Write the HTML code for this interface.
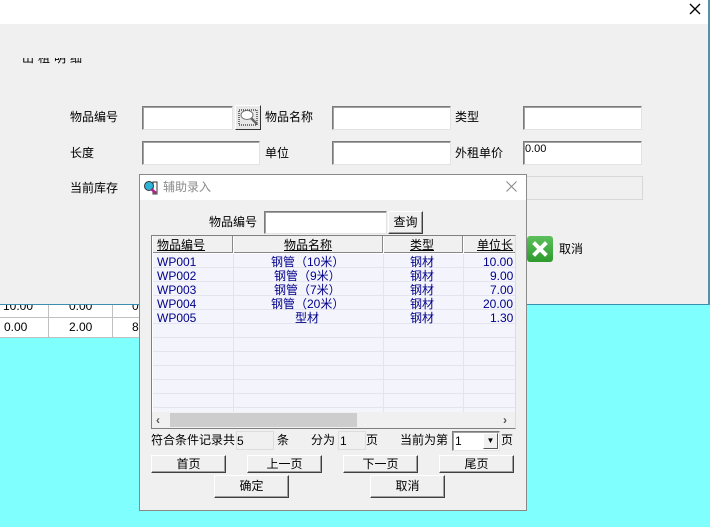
<!DOCTYPE html>
<html><head><meta charset="utf-8"><style>
*{margin:0;padding:0;box-sizing:border-box}
body{width:710px;height:527px;overflow:hidden;background:#80ffff;font-family:"Liberation Sans","Noto Sans CJK SC",sans-serif;font-size:12px;color:#000;position:relative}
.a{position:absolute}
.in{position:absolute;background:#fff;border:1px solid #7a7a7a;border-right-color:#e3e3e3;border-bottom-color:#e3e3e3;box-shadow:inset 1px 1px 0 #a0a0a0}
.lb{position:absolute;font-size:12px;line-height:14px;white-space:nowrap}
.btn{position:absolute;background:#f0f0f0;border:1px solid;border-color:#fff #404040 #404040 #fff;box-shadow:inset -1px -1px 0 #a0a0a0;text-align:center;font-size:12px;line-height:16px}
.bl{color:#00008b;font-size:12px;line-height:14px;position:absolute;white-space:nowrap}
</style></head><body>
<div class="a" style="left:0;top:0;width:710px;height:24px;background:#fff"></div>
<div class="a" style="left:0;top:24px;width:708px;height:280px;background:#f0f0f0"></div>
<div class="a" style="left:0;top:304px;width:708px;height:1px;background:#3a8fb0"></div>
<div class="a" style="left:708px;top:0;width:2px;height:305px;background:#5a8fa8"></div>
<div class="a" style="left:689px;top:3px"><svg width="12" height="12"><path d="M1 1L11 11M11 1L1 11" stroke="#000" stroke-width="1.3"/></svg></div>
<div class="a" style="left:22px;top:58px;width:80px;height:8px;overflow:hidden"><div style="font-size:12px;line-height:14px;margin-top:-7px;letter-spacing:4px">出租明细</div></div>
<!-- left grid -->
<div class="a" style="left:0;top:305px;width:140px;height:33px;background:#fff"></div>
<div class="a" style="left:0;top:317px;width:140px;height:1px;background:#c0c0c0"></div>
<div class="a" style="left:0;top:337px;width:140px;height:1px;background:#c0c0c0"></div>
<div class="a" style="left:48px;top:305px;width:1px;height:33px;background:#c0c0c0"></div>
<div class="a" style="left:112px;top:305px;width:1px;height:33px;background:#c0c0c0"></div>
<div class="a" style="left:0;top:305px;width:140px;height:12px;overflow:hidden"><div style="position:absolute;top:-6px;left:3px;font-size:12px">10.00</div><div style="position:absolute;top:-6px;left:69px">0.00</div><div style="position:absolute;top:-6px;left:132px">0</div></div>
<div class="lb" style="left:4px;top:320px">0.00</div>
<div class="lb" style="left:69px;top:320px">2.00</div>
<div class="lb" style="left:132px;top:320px">8</div>
<!-- main fields -->
<div class="lb" style="left:70px;top:110px">物品编号</div>
<div class="in" style="left:142px;top:106px;width:91px;height:24px"></div>
<div class="a" style="left:235px;top:105px;width:26px;height:25px;border:1px solid;border-color:#fff #333 #333 #fff;background:#e8e8e8"><svg width="24" height="23" viewBox="0 0 24 23"><rect x="3" y="4" width="18" height="15" fill="none" stroke="#000" stroke-dasharray="1 1"/><ellipse cx="11" cy="9" rx="6" ry="4.5" fill="#fff" stroke="#777"/><line x1="15" y1="12" x2="21" y2="18" stroke="#666" stroke-width="2.5"/></svg></div>
<div class="lb" style="left:265px;top:110px">物品名称</div>
<div class="in" style="left:332px;top:106px;width:119px;height:24px"></div>
<div class="lb" style="left:455px;top:110px">类型</div>
<div class="in" style="left:523px;top:106px;width:119px;height:24px"></div>
<div class="lb" style="left:70px;top:146px">长度</div>
<div class="in" style="left:142px;top:141px;width:118px;height:24px"></div>
<div class="lb" style="left:265px;top:146px">单位</div>
<div class="in" style="left:332px;top:141px;width:119px;height:24px"></div>
<div class="lb" style="left:455px;top:146px">外租单价</div>
<div class="in" style="left:523px;top:141px;width:119px;height:24px"><span style="position:absolute;left:1px;top:1px;font-size:11px;line-height:12px">0.00</span></div>
<div class="lb" style="left:70px;top:181px">当前库存</div>
<div class="a" style="left:523px;top:176px;width:120px;height:24px;border:1px solid #d8d8d8;background:#f0f0f0"></div>
<div class="a" style="left:527px;top:236px;width:26px;height:26px;border-radius:3px;background:linear-gradient(#5cc05c,#2e9a2e)"><svg width="26" height="26"><path d="M8 8 L18 18 M18 8 L8 18" stroke="#fff" stroke-width="4" stroke-linecap="square"/></svg></div>
<div class="lb" style="left:559px;top:242px">取消</div>
<!-- dialog -->
<div class="a" style="left:139px;top:174px;width:388px;height:337px;background:#f0f0f0;border:1px solid #8a8a8a"></div>
<div class="a" style="left:140px;top:175px;width:386px;height:25px;background:#fff"></div>
<div class="a" style="left:143px;top:179px"><svg width="16" height="16"><rect x="10" y="3" width="4" height="12" fill="none" stroke="#333"/><circle cx="6" cy="7" r="4.5" fill="#2ab5d8" stroke="#333"/><line x1="8" y1="10" x2="13" y2="14" stroke="#b0208a" stroke-width="2.5"/></svg></div>
<div class="lb" style="left:163px;top:180px;color:#8a8a8a">辅助录入</div>
<div class="a" style="left:506px;top:181px"><svg width="11" height="11"><path d="M0.5 0.5L10.5 10.5M10.5 0.5L0.5 10.5" stroke="#888" stroke-width="1"/></svg></div>
<div class="lb" style="left:209px;top:215px">物品编号</div>
<div class="in" style="left:264px;top:211px;width:123px;height:23px"></div>
<div class="btn" style="left:388px;top:211px;width:35px;height:23px;line-height:20px">查询</div>
<!-- grid -->
<div class="a" style="left:151px;top:235px;width:365px;height:194px;background:#fff;border:1px solid #808080;border-right-color:#ddd"></div>
<div class="a" style="left:153px;top:236px;width:362px;height:17px;background:#f0f0f0;border-bottom:1px solid #888"></div>
<div class="a" style="left:232px;top:236px;width:2px;height:17px;background:#888;border-right:1px solid #fff"></div>
<div class="a" style="left:382px;top:236px;width:2px;height:17px;background:#888;border-right:1px solid #fff"></div>
<div class="a" style="left:462px;top:236px;width:2px;height:17px;background:#888;border-right:1px solid #fff"></div>
<div class="lb" style="left:157px;top:238px;text-decoration:underline">物品编号</div>
<div class="lb" style="left:284px;top:238px;text-decoration:underline">物品名称</div>
<div class="lb" style="left:410px;top:238px;text-decoration:underline">类型</div>
<div class="lb" style="left:477px;top:238px;text-decoration:underline;width:38px;overflow:hidden">单位长</div>
<div class="a" style="left:153px;top:254px;width:362px;height:158px;background:#f4f4fc"></div>
<div class="a" style="left:233px;top:254px;width:1px;height:158px;background:#e4e4ee"></div>
<div class="a" style="left:383px;top:254px;width:1px;height:158px;background:#e4e4ee"></div>
<div class="a" style="left:463px;top:254px;width:1px;height:158px;background:#e4e4ee"></div>
<div class="a" style="left:153px;top:254px;width:362px;height:158px;background:repeating-linear-gradient(transparent 0 13px,#e4e4ee 13px 14px)"></div>
<div class="bl" style="left:157px;top:255px">WP001</div><div class="bl" style="left:271px;top:255px">钢管（10米）</div><div class="bl" style="left:410px;top:255px">钢材</div><div class="bl" style="left:483px;top:255px">10.00</div>
<div class="bl" style="left:157px;top:269px">WP002</div><div class="bl" style="left:274px;top:269px">钢管（9米）</div><div class="bl" style="left:410px;top:269px">钢材</div><div class="bl" style="left:490px;top:269px">9.00</div>
<div class="bl" style="left:157px;top:283px">WP003</div><div class="bl" style="left:274px;top:283px">钢管（7米）</div><div class="bl" style="left:410px;top:283px">钢材</div><div class="bl" style="left:490px;top:283px">7.00</div>
<div class="bl" style="left:157px;top:297px">WP004</div><div class="bl" style="left:271px;top:297px">钢管（20米）</div><div class="bl" style="left:410px;top:297px">钢材</div><div class="bl" style="left:483px;top:297px">20.00</div>
<div class="bl" style="left:157px;top:311px">WP005</div><div class="bl" style="left:295px;top:311px">型材</div><div class="bl" style="left:410px;top:311px">钢材</div><div class="bl" style="left:490px;top:311px">1.30</div>
<div class="a" style="left:152px;top:412px;width:363px;height:16px;background:#f0f0f0"></div>
<div class="a" style="left:170px;top:413px;width:187px;height:14px;background:#cdcdcd"></div>
<div class="lb" style="left:156px;top:413px;font-size:12px;font-weight:bold;color:#555">‹</div>
<div class="lb" style="left:503px;top:413px;font-size:12px;font-weight:bold;color:#555">›</div>
<!-- footer -->
<div class="lb" style="left:151px;top:433px">符合条件记录共</div>
<div class="a" style="left:236px;top:431px;width:38px;height:19px;border:1px solid #ddd;background:#f0f0f0"><span style="position:absolute;left:0;top:2px">5</span></div>
<div class="lb" style="left:277px;top:433px">条</div>
<div class="lb" style="left:311px;top:433px">分为</div>
<div class="a" style="left:338px;top:431px;width:28px;height:19px;border:1px solid #ddd;background:#f0f0f0"><span style="position:absolute;left:1px;top:2px">1</span></div>
<div class="lb" style="left:366px;top:433px">页</div>
<div class="lb" style="left:400px;top:433px">当前为第</div>
<div class="in" style="left:452px;top:431px;width:48px;height:20px"><span style="position:absolute;left:2px;top:2px">1</span><div style="position:absolute;right:1px;top:1px;width:15px;height:16px;background:#f0f0f0;border:1px solid;border-color:#fff #555 #555 #fff;font-size:8px;text-align:center;line-height:14px">▼</div></div>
<div class="lb" style="left:501px;top:433px">页</div>
<div class="btn" style="left:151px;top:455px;width:75px;height:18px">首页</div>
<div class="btn" style="left:247px;top:455px;width:75px;height:18px">上一页</div>
<div class="btn" style="left:343px;top:455px;width:75px;height:18px">下一页</div>
<div class="btn" style="left:439px;top:455px;width:75px;height:18px">尾页</div>
<div class="btn" style="left:214px;top:475px;width:75px;height:23px;line-height:20px">确定</div>
<div class="btn" style="left:370px;top:475px;width:75px;height:23px;line-height:20px">取消</div>
</body></html>
